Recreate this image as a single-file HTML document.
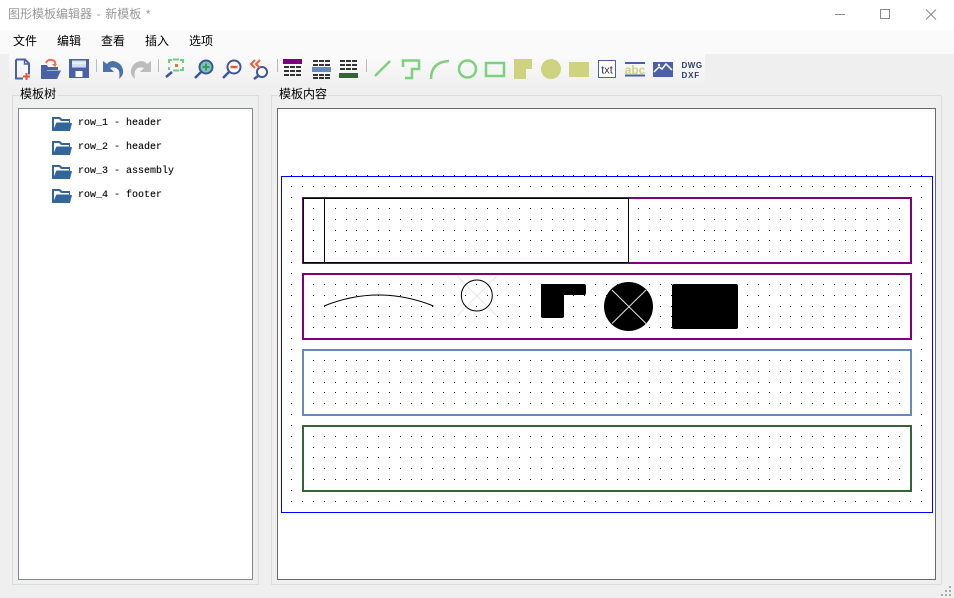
<!DOCTYPE html>
<html><head><meta charset="utf-8">
<style>
html,body{margin:0;padding:0;width:954px;height:598px;overflow:hidden;background:#efefef;font-family:"Liberation Sans","Noto Sans CJK SC",sans-serif;}
.a{position:absolute}
#title{left:0;top:0;width:954px;height:30px;background:#fff}
#title span{position:absolute;left:8px;top:6px;font-size:12px;line-height:17px;color:#999;word-spacing:1.3px}
#menu{left:0;top:30px;width:954px;height:24px;background:#fafafa}
#menu span{position:absolute;top:3px;font-size:12px;line-height:17px;color:#000}
#tb{left:9px;top:54px;width:696px;height:30px;background:linear-gradient(#fbfbfb,#f0f0f0)}
.g{border:1px solid #dcdcdc;box-sizing:border-box}
.lbl{font-size:12px;line-height:16px;color:#000;background:#efefef;padding:0 1px}
.t{position:absolute;left:78px;font-family:"Liberation Mono","DejaVu Sans Mono",monospace;font-size:10px;line-height:12px;color:#000;white-space:pre;-webkit-text-stroke:.1px #000}
</style></head>
<body>
<div class="a" id="title"><span>图形模板编辑器 - 新模板 *</span>
<svg class="a" style="left:0;top:0" width="954" height="30" fill="none" stroke="#8a8a8a" stroke-width="1">
<path d="M835 14.5h10"/><rect x="880.5" y="9.5" width="9" height="9"/><path d="M926 9.500l10 10M936 9.500l-10 10"/></svg></div>
<div class="a" id="menu"><span style="left:13px">文件</span><span style="left:57px">编辑</span><span style="left:101px">查看</span><span style="left:145px">插入</span><span style="left:189px">选项</span></div>
<div class="a" id="tb"></div>

<svg class="a" style="left:0;top:54px" width="720" height="34" viewBox="0 54 720 34">
<!-- new -->
<path d="M16 59.500h9l4 4v11M23 78.500h-7v-19" fill="none" stroke="#4a62a5" stroke-width="2"/><path d="M24.500 60v4h4" fill="none" stroke="#4a62a5" stroke-width="1.500"/>
<path d="M23 76.500h7M26.500 73v7" stroke="#e8552a" stroke-width="2"/>
<!-- open -->
<path d="M41 79V65h6l1 2h10v3H47l-3 7" fill="#4a62a5"/><path d="M46 70.500h15l-4 8.500H41z" fill="#4a62a5"/>
<path d="M46 63q2-4 6-3t3 5" fill="none" stroke="#e8704a" stroke-width="2"/><path d="M52 64l3 3 2-3z" fill="#e8704a"/>
<!-- save -->
<path d="M69 59h20v19H69z" fill="#4a62a5"/><rect x="72" y="60.500" width="14" height="7" fill="#cfe0f5"/><path d="M72 63h14" stroke="#fff"/><rect x="75.500" y="71" width="7" height="6" fill="#fff"/>
<!-- sep -->
<rect x="96" y="59" width="1" height="13" fill="#bbb"/>
<!-- undo -->
<path d="M103 61V72H114L110 68Q116 66 119 71Q120 75 119 79Q124 75 123 70Q121 62 113 61Q109 61 107 64Z" fill="#4a72a8"/>
<path d="M151 61V72H140L144 68Q138 66 135 71Q134 75 135 79Q130 75 131 70Q133 62 141 61Q145 61 147 64Z" fill="#bcbcbc"/>
<rect x="158" y="59" width="1" height="13" fill="#bbb"/>
<!-- zoom extents -->
<path d="M172 60h-3v3M180 60h3v3M169 70v-3M183 67v3h-3" fill="none" stroke="#6fcf7f" stroke-width="2"/>
<path d="M173 59.500h6M173 70.500h6" stroke="#6fcf7f" stroke-width="2"/>
<rect x="175" y="64" width="3" height="3" fill="#e8704a"/>
<path d="M166 77l6-5" stroke="#3d5599" stroke-width="2.500"/>
<!-- zoom in -->
<circle cx="206" cy="67" r="6.500" fill="#7dc8a8" stroke="#3d5599" stroke-width="2"/><path d="M201.500 71.500l-6.500 6.500" stroke="#3d5599" stroke-width="2.500"/><path d="M206 63.500v7M202.500 67h7" stroke="#2f9a6a" stroke-width="2"/>
<!-- zoom out -->
<circle cx="234" cy="67" r="6.500" fill="#fff" stroke="#3d5599" stroke-width="2"/><path d="M229.500 71.500l-6.500 6.500" stroke="#3d5599" stroke-width="2.500"/><path d="M230.500 67h7" stroke="#e8552a" stroke-width="2.500"/>
<!-- zoom prev -->
<circle cx="262" cy="72" r="5" fill="#fff" stroke="#3d5599" stroke-width="2"/><path d="M258 76l-4 3" stroke="#3d5599" stroke-width="2.500"/>
<path d="M255 60l-4 4 4 4M260 60l-4 4 4 4" fill="none" stroke="#e8603a" stroke-width="2"/>
<rect x="277" y="59" width="1" height="13" fill="#bbb"/>
<!-- tables -->
<rect x="283" y="59" width="19" height="5" fill="#7f007f"/>
<path d="M284 67h17M284 71h17M284 75h17" stroke="#333" stroke-width="2" stroke-dasharray="5 1"/>
<path d="M313 61h18M313 65h18M313 75h18M313 78h18" stroke="#333" stroke-width="2" stroke-dasharray="5 1"/><rect x="312" y="67" width="19" height="5" fill="#6688bb"/>
<path d="M340 61h18M340 65h18M340 69h18" stroke="#333" stroke-width="2" stroke-dasharray="5 1"/><rect x="339" y="73" width="19" height="5" fill="#336633"/>
<rect x="366" y="59" width="1" height="13" fill="#bbb"/>
<!-- draw tools -->
<g fill="none" stroke="#7dd17d" stroke-width="2.500">
<path d="M375 76l15-15"/>
<path d="M403 67V60.500H419V69H412V78H405"/>
<path d="M431 79q0-17 18-18"/>
<circle cx="467.500" cy="69" r="8.500"/>
<rect x="486" y="63" width="18" height="13"/>
</g>
<path d="M514 59h18v10h-6v10h-12z" fill="#cfd27f"/>
<circle cx="551" cy="69" r="10" fill="#cfd27f"/>
<rect x="569" y="62" width="20" height="15" fill="#cfd27f"/>
<rect x="598.500" y="60.500" width="17" height="17" fill="#fff" stroke="#4a62a5"/>
<text x="607" y="73.500" text-anchor="middle" font-family="Liberation Sans" font-size="11" fill="#333">txt</text>
<path d="M625 63h20M625 75.500h20" stroke="#4a62a5" stroke-width="2"/>
<text x="635" y="74" text-anchor="middle" font-family="Liberation Sans" font-size="12" font-weight="bold" fill="#cfd27f">abc</text>
<rect x="653" y="62" width="20" height="15" fill="#4a62a5"/><path d="M654 72l5-5 3 2 4-5 6 6" fill="none" stroke="#fff" stroke-width="1.500"/><circle cx="659" cy="65" r="1.200" fill="#fff"/>
<text x="681.500" y="68" font-family="Liberation Sans" font-size="8" font-weight="bold" letter-spacing=".5" fill="#2f3d6b">DWG</text>
<text x="681.500" y="78" font-family="Liberation Sans" font-size="8" font-weight="bold" letter-spacing=".8" fill="#2f3d6b">DXF</text>
</svg>

<div class="a g" style="left:12px;top:95px;width:247px;height:490px"></div>
<div class="a lbl" style="left:19px;top:86px">模板树</div>
<div class="a" style="left:18px;top:108px;width:235px;height:472px;box-sizing:border-box;border:1px solid #828790;background:#fff">
</div>
<svg class="a" style="left:52px;top:116px" width="20" height="88">
<defs><g id="f"><path d="M0 1H8L10 3H18V7H20L18 15H0Z" fill="#336699"/><path d="M2 3H7L9 5H17V6.500H4.500L2 12Z" fill="#fff"/></g></defs>
<use href="#f"/><use href="#f" y="24"/><use href="#f" y="48"/><use href="#f" y="72"/>
</svg>
<div class="t" style="top:118px">row_1 - header</div>
<div class="t" style="top:142px">row_2 - header</div>
<div class="t" style="top:166px">row_3 - assembly</div>
<div class="t" style="top:190px">row_4 - footer</div>

<div class="a g" style="left:271px;top:95px;width:671px;height:490px"></div>
<div class="a lbl" style="left:278px;top:86px">模板内容</div>
<div class="a" style="left:277px;top:108px;width:659px;height:472px;box-sizing:border-box;border:1px solid #696969;background:#fff"></div>

<svg class="a" id="c" style="left:0;top:0" width="954" height="598" viewBox="0 0 954 598">
<path id="dots" fill="#000" shape-rendering="crispEdges" d=""></path>
<g shape-rendering="crispEdges" fill="none">
<rect x="281.500" y="176.500" width="651" height="336" stroke="#0000ff"/>
<rect x="303" y="198" width="608" height="65" stroke="#7f007f" stroke-width="2"/>
<rect x="303" y="274" width="608" height="65" stroke="#7f007f" stroke-width="2"/>
<rect x="303" y="350" width="608" height="65" stroke="#6688bb" stroke-width="2"/>
<rect x="303" y="426" width="608" height="65" stroke="#336633" stroke-width="2"/>
<rect x="303.500" y="198.500" width="325" height="64" stroke="#000"/>
<path d="M324.500 198v64" stroke="#000"/>
</g>
<path d="M324 306Q378.500 284 433.500 306" fill="none" stroke="#000"/>
<path d="M457 276l40 40M497 276l-40 40" stroke="#e8e8e8"/>
<circle cx="476.800" cy="295.500" r="15.500" fill="none" stroke="#000"/>
<path d="M543 284h41q2 0 2 2v7q0 2-2 2h-20v21q0 2-2 2h-19q-2 0-2-2v-30q0-2 2-2z"/>
<circle cx="628.500" cy="306.500" r="24.500"/>
<path d="M612 290l34 33.500M646 290l-34 33.500" stroke="#e8e8e8"/>
<rect x="672" y="284" width="66" height="45" rx="2"/>
<g fill="#aaa"><rect x="949" y="586" width="2" height="2"/><rect x="945" y="590" width="2" height="2"/><rect x="949" y="590" width="2" height="2"/><rect x="941" y="594" width="2" height="2"/><rect x="945" y="594" width="2" height="2"/><rect x="949" y="594" width="2" height="2"/></g>
</svg>
<script>
var d='';
for(var j=-1;j<30;j++){for(var i=0;i<59;i++){
var x=Math.floor(291.78+i*10.85),y=Math.floor(186.7+j*10.85);
d+='M'+x+' '+y+'h1v1h-1z';}}
document.getElementById('dots').setAttribute('d',d);
</script>
</body></html>
